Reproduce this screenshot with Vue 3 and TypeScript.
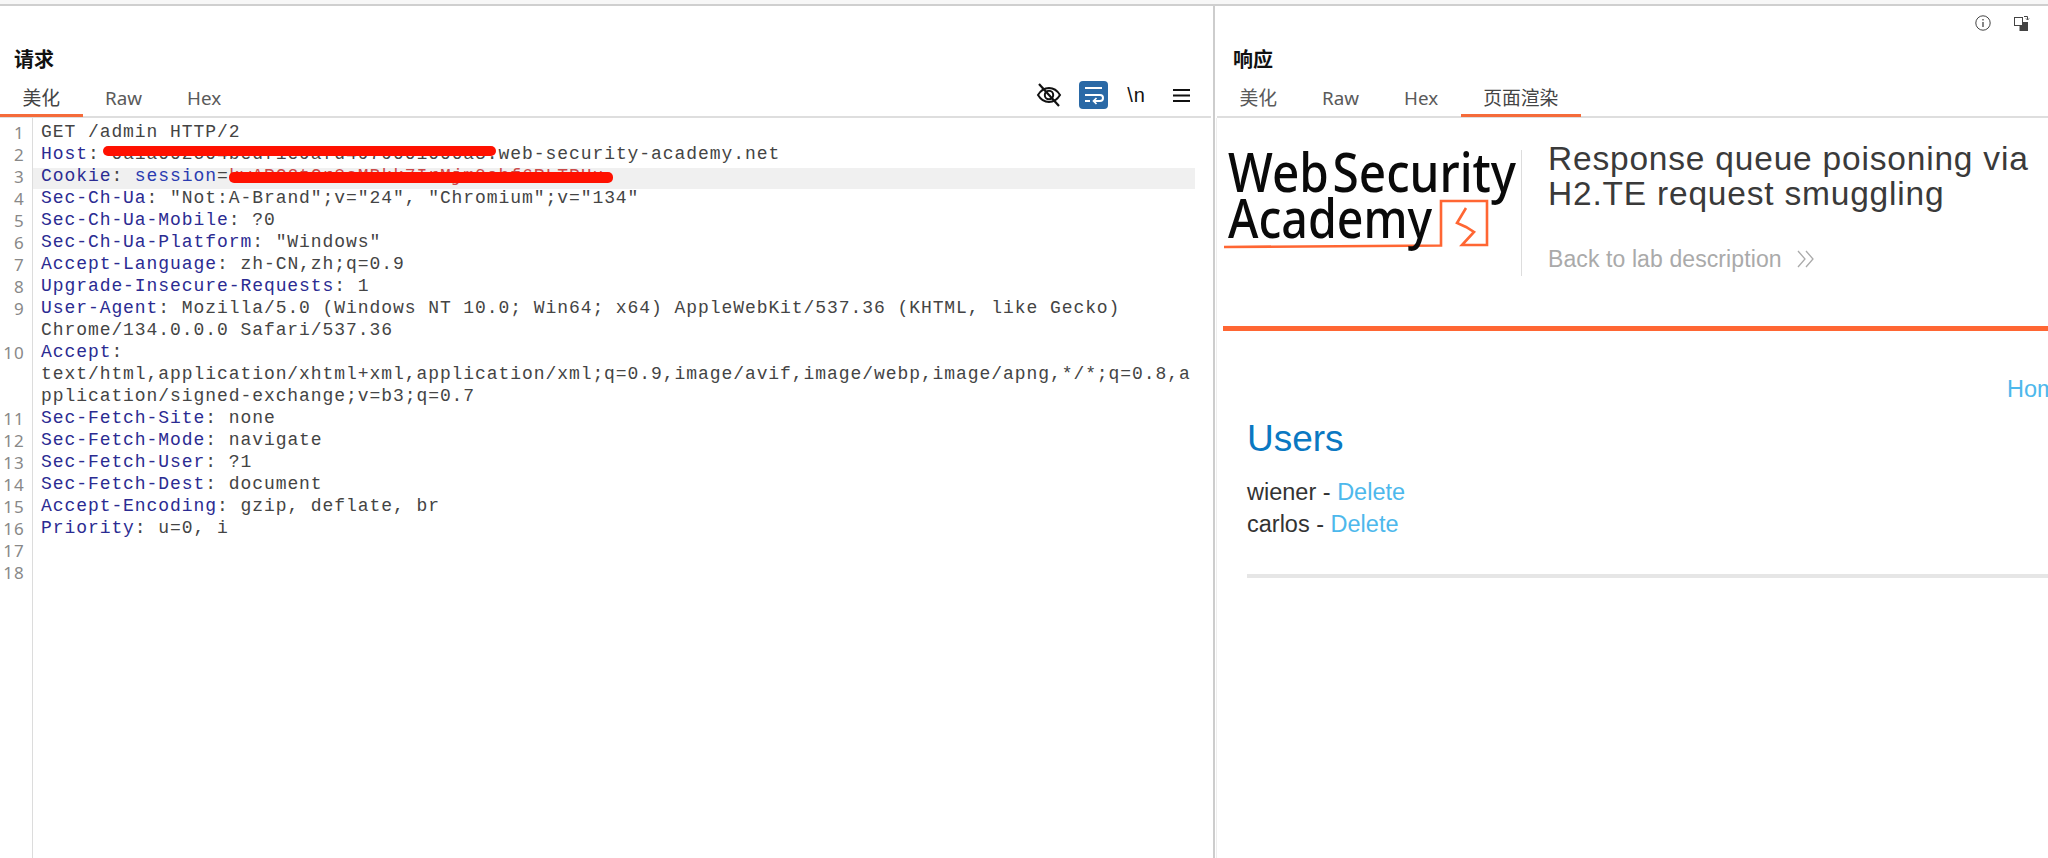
<script setup lang="ts">
interface Row {
  key?: string
  sep?: string
  lines: string[]
  mask?: string
  tail?: string
  extra?: string
}

const rows: Row[] = [
  { lines: ['GET /admin HTTP/2'] },
  { key: 'Host', lines: [''], mask: '0a1a002c04bedf1e9afd4979001000a3.', tail: 'web-security-academy.net' },
  { key: 'Cookie', extra: 'session', lines: [''], mask: 'kwAPG2tGr8sMBkk7IrMjm0ohf6RLTPHu' },
  { key: 'Sec-Ch-Ua', lines: ['"Not:A-Brand";v="24", "Chromium";v="134"'] },
  { key: 'Sec-Ch-Ua-Mobile', lines: ['?0'] },
  { key: 'Sec-Ch-Ua-Platform', lines: ['"Windows"'] },
  { key: 'Accept-Language', lines: ['zh-CN,zh;q=0.9'] },
  { key: 'Upgrade-Insecure-Requests', lines: ['1'] },
  { key: 'User-Agent', lines: ['Mozilla/5.0 (Windows NT 10.0; Win64; x64) AppleWebKit/537.36 (KHTML, like Gecko)', 'Chrome/134.0.0.0 Safari/537.36'] },
  { key: 'Accept', lines: ['', 'text/html,application/xhtml+xml,application/xml;q=0.9,image/avif,image/webp,image/apng,*/*;q=0.8,a', 'pplication/signed-exchange;v=b3;q=0.7'] },
  { key: 'Sec-Fetch-Site', lines: ['none'] },
  { key: 'Sec-Fetch-Mode', lines: ['navigate'] },
  { key: 'Sec-Fetch-User', lines: ['?1'] },
  { key: 'Sec-Fetch-Dest', lines: ['document'] },
  { key: 'Accept-Encoding', lines: ['gzip, deflate, br'] },
  { key: 'Priority', lines: ['u=0, i'] },
  { lines: [''] },
  { lines: [''] }
]

const requestTabs = ['美化', 'Raw', 'Hex']
const responseTabs = ['美化', 'Raw', 'Hex', '页面渲染']
const users = ['wiener', 'carlos']
</script>

<template>
  <div class="app">
    <div class="top-band"></div>
    <div class="panes">
      <section class="pane request">
        <div class="toolbar"></div>
        <h2 class="pane-title">请求</h2>
        <div class="tabs-row">
          <div class="tabs">
            <span v-for="(t, i) in requestTabs" :key="t" class="tab" :class="{ active: i === 0 }">{{ t }}</span>
          </div>
          <div class="actions">
            <svg class="ic-eye" width="28" height="28" viewBox="0 0 28 28" fill="none" stroke="#111" stroke-width="2">
              <path d="M3 14c3-5 7-7 11-7s8 2 11 7c-3 5-7 7-11 7s-8-2-11-7z" />
              <circle cx="14" cy="14" r="4.2" />
              <path d="M4 3l20 22" stroke-width="2.2" />
            </svg>
            <span class="wrap-btn">
              <svg width="29" height="28" viewBox="0 0 29 28" fill="none" stroke="#fff" stroke-width="2">
                <path d="M6 7h17" />
                <path d="M6 14h15a3 3 0 0 1 0 6h-6" />
                <path d="M17.500 17l-3 3 3 3" stroke-width="1.700" />
                <path d="M6 20h5" />
              </svg>
            </span>
            <span class="newline">\n</span>
            <svg width="17" height="15" viewBox="0 0 17 15" stroke="#111" stroke-width="2.200">
              <path d="M0 2h17M0 7.500h17M0 13h17" />
            </svg>
          </div>
        </div>
        <div class="editor">
          <div class="gutter">
            <template v-for="(r, i) in rows" :key="i">
              <div class="num">{{ i + 1 }}</div>
              <div v-for="n in r.lines.length - 1" :key="n" class="num"></div>
            </template>
          </div>
          <div class="code">
            <div v-for="(r, i) in rows" :key="i" class="row" :class="{ hl: i === 2 }">
              <div class="line">
                <template v-if="r.key"><span class="k">{{ r.key }}</span>: </template>
                <template v-if="r.extra"><span class="attr">{{ r.extra }}</span>=</template>
                <span v-if="r.mask" class="masked" :class="{ cookie: !!r.extra }">{{ r.mask }}<i class="redact"></i></span>{{ r.tail }}{{ r.lines[0] }}
              </div>
              <div v-for="(l, j) in r.lines.slice(1)" :key="j" class="line">{{ l }}</div>
            </div>
          </div>
        </div>
      </section>

      <section class="pane response">
        <div class="toolbar right">
          <svg width="16" height="16" viewBox="0 0 16 16" fill="none" stroke="#444" stroke-width="1">
            <circle cx="8" cy="8" r="7.200" />
            <path d="M8 7v5" stroke-width="1.300" />
            <path d="M8 4v1.500" stroke-width="1.300" />
          </svg>
          <svg width="16" height="16" viewBox="0 0 16 16" fill="none">
            <rect x="5.500" y="7" width="8.500" height="9" fill="#444" />
            <rect x="0.500" y="2.500" width="8" height="8" fill="#fff" stroke="#444" />
            <path d="M10 1.500h3.500v3" stroke="#444" />
            <path d="M12 3.500l1.500 1.500 1.500-1.500" stroke="#444" />
          </svg>
        </div>
        <h2 class="pane-title">响应</h2>
        <div class="tabs-row response-tabs">
          <div class="tabs">
            <span v-for="(t, i) in responseTabs" :key="t" class="tab" :class="{ active: i === 3 }">{{ t }}</span>
          </div>
        </div>
        <div class="frame">
          <header class="lab-header">
            <svg class="logo" width="296" height="104" viewBox="0 0 296 104" fill="none">
              <path d="M3 97l217-1.500V51h46v44h-25l12-13-8-5-9-4 9-15" stroke="#ff6633" stroke-width="2.600" />
              <text x="7" y="42" textLength="288" lengthAdjust="spacingAndGlyphs" class="logo-text sec">Web Security</text>
              <text x="7" y="88" textLength="204" lengthAdjust="spacingAndGlyphs" class="logo-text">Academy</text>
            </svg>
            <div class="lab-info">
              <h1 class="lab-title">Response queue poisoning via<br />H2.TE request smuggling</h1>
              <div class="back">
                <span>Back to lab description</span>
                <svg width="18" height="18" viewBox="0 0 18 18" fill="none" stroke="#aaa" stroke-width="1.300">
                  <path d="M1 1l7 8-7 8M9 1l7 8-7 8" />
                </svg>
              </div>
            </div>
          </header>
          <main class="lab-body">
            <nav class="lab-nav"><a>Home</a></nav>
            <h2 class="users-title">Users</h2>
            <p v-for="u in users" :key="u" class="user">{{ u }} - <a>Delete</a></p>
            <hr class="rule" />
          </main>
        </div>
      </section>
    </div>
  </div>
</template>

<style>
html, body { margin: 0; background: #fff; overflow: hidden; }
</style>

<style scoped>
.app {
  width: 2048px;
  height: 858px;
  display: flex;
  flex-direction: column;
  overflow: hidden;
  background: #fff;
  font-family: "Noto Sans", "Noto Sans CJK SC", sans-serif;
}
.top-band {
  height: 4px;
  background: #f7f7f7;
  border-bottom: 2px solid #cfcfcf;
  flex: none;
}
.panes {
  flex: 1;
  display: flex;
  min-height: 0;
}
.pane {
  display: flex;
  flex-direction: column;
  min-width: 0;
}
.request {
  width: 1213px;
  flex: none;
  border-right: 2px solid #cdcdcd;
}
.response {
  flex: 1;
  overflow: hidden;
}
.toolbar {
  height: 34px;
  flex: none;
}
.toolbar.right {
  display: flex;
  justify-content: flex-end;
  align-items: center;
  gap: 23px;
  padding: 0 18px 0 0;
}
.pane-title {
  margin: 0;
  height: 38px;
  line-height: 38px;
  padding-left: 14px;
  font-size: 20px;
  font-weight: 700;
  color: #111;
  font-family: "Noto Sans CJK SC", sans-serif;
}
.response .pane-title { padding-left: 18px; }
.tabs-row {
  height: 38px;
  flex: none;
  display: flex;
  justify-content: space-between;
  align-items: stretch;
  border-bottom: 2px solid #dedede;
  margin-right: 2px;
}
.response-tabs {
  margin: 0;
  margin-left: 2px;
}
.tabs { display: flex; }
.tab {
  padding: 0 22.500px;
  font-size: 18.800px;
  line-height: 40px;
  height: 38px;
  color: #5a5a5a;
  position: relative;
}
.tab.active { color: #444; }
.tab.active::after {
  content: "";
  position: absolute;
  left: 0;
  right: 0;
  bottom: -1px;
  height: 3px;
  background: #f56b3a;
}
.actions {
  display: flex;
  align-items: center;
  padding-right: 21px;
  padding-bottom: 4px;
}
.ic-eye { margin-right: 16px; }
.wrap-btn {
  width: 29px;
  height: 28px;
  background: #2a69a6;
  border-radius: 4px;
  display: flex;
  margin-right: 19.500px;
}
.newline {
  font-family: "Liberation Sans", sans-serif;
  font-size: 20px;
  color: #111;
  margin-right: 27px;
  letter-spacing: 1px;
}
.editor {
  flex: 1;
  display: flex;
  min-height: 0;
}
.gutter {
  width: 32px;
  flex: none;
  border-right: 1px solid #dcdcdc;
  padding-top: 3px;
}
.num {
  height: 22px;
  line-height: 24px;
  padding-right: 7px;
  text-align: right;
  font-family: "Noto Sans", sans-serif;
  font-size: 17px;
  letter-spacing: 1.200px;
  color: #888;
}
.code {
  width: 1162px;
  padding-top: 3px;
  font-family: "Liberation Mono", monospace;
  font-size: 18px;
  letter-spacing: 0.930px;
  color: #444;
  isolation: isolate;
}
.row { position: relative; }
.row.hl::before {
  content: "";
  position: absolute;
  left: 0;
  right: 0;
  top: 3px;
  height: 21px;
  background: #f0f0f0;
  z-index: -1;
}
.line {
  height: 22px;
  line-height: 22px;
  padding-left: 8px;
  white-space: pre;
}
.k { color: #2b2b92; }
.attr { color: #2a3bb0; }
.masked { position: relative; }
.masked.cookie { color: #c94a4a; }
.redact {
  position: absolute;
  left: -8px;
  right: 3px;
  top: 2px;
  height: 10px;
  background: #ff1100;
  border-radius: 5px;
}
.masked.cookie .redact {
  left: 0;
  right: -9px;
  top: 6px;
  height: 11px;
}
.frame {
  flex: 1;
  margin-left: 1px;
  border-left: 1px solid #eeeeee;
  min-height: 0;
  overflow: hidden;
}
.lab-header {
  display: flex;
  margin-left: 6px;
  padding-top: 32px;
  height: 176px;
  border-bottom: 5px solid #ff6633;
}
.logo {
  flex: none;
  display: block;
  margin-left: -2px;
}
.logo-text {
  font-family: "Noto Sans", sans-serif;
  font-size: 55px;
  font-weight: 500;
  fill: #0a0a0a;
}
.logo-text.sec { word-spacing: -10px; }
.lab-info {
  margin-left: 4px;
  padding-left: 26px;
  border-left: 1px solid #dddddd;
  height: 126px;
  font-family: "Liberation Sans", sans-serif;
}
.lab-title {
  margin: -9px 0 0;
  font-size: 33.500px;
  letter-spacing: 0.800px;
  line-height: 35px;
  font-weight: 400;
  color: #3a3a3a;
  white-space: nowrap;
}
.back {
  margin-top: 32px;
  display: flex;
  align-items: center;
  gap: 15px;
  font-size: 23px;
  letter-spacing: 0.100px;
  line-height: 32px;
  color: #aaa;
}
.lab-body {
  padding: 42px 0 0 30px;
  width: 900px;
  font-family: "Liberation Sans", sans-serif;
  color: #333;
}
.lab-nav {
  font-size: 23.500px;
  line-height: 32px;
  padding-left: 760px;
  white-space: nowrap;
  color: #4db8ec;
}
.users-title {
  margin: 12px 0 15px;
  font-size: 37px;
  line-height: 44px;
  font-weight: 400;
  color: #0a78c2;
}
.user {
  margin: 0;
  font-size: 23.500px;
  line-height: 32px;
}
.user a { color: #4db8ec; }
.rule {
  margin: 34px 0 0;
  height: 4px;
  border: 0;
  background: #e6e6e6;
}
</style>
